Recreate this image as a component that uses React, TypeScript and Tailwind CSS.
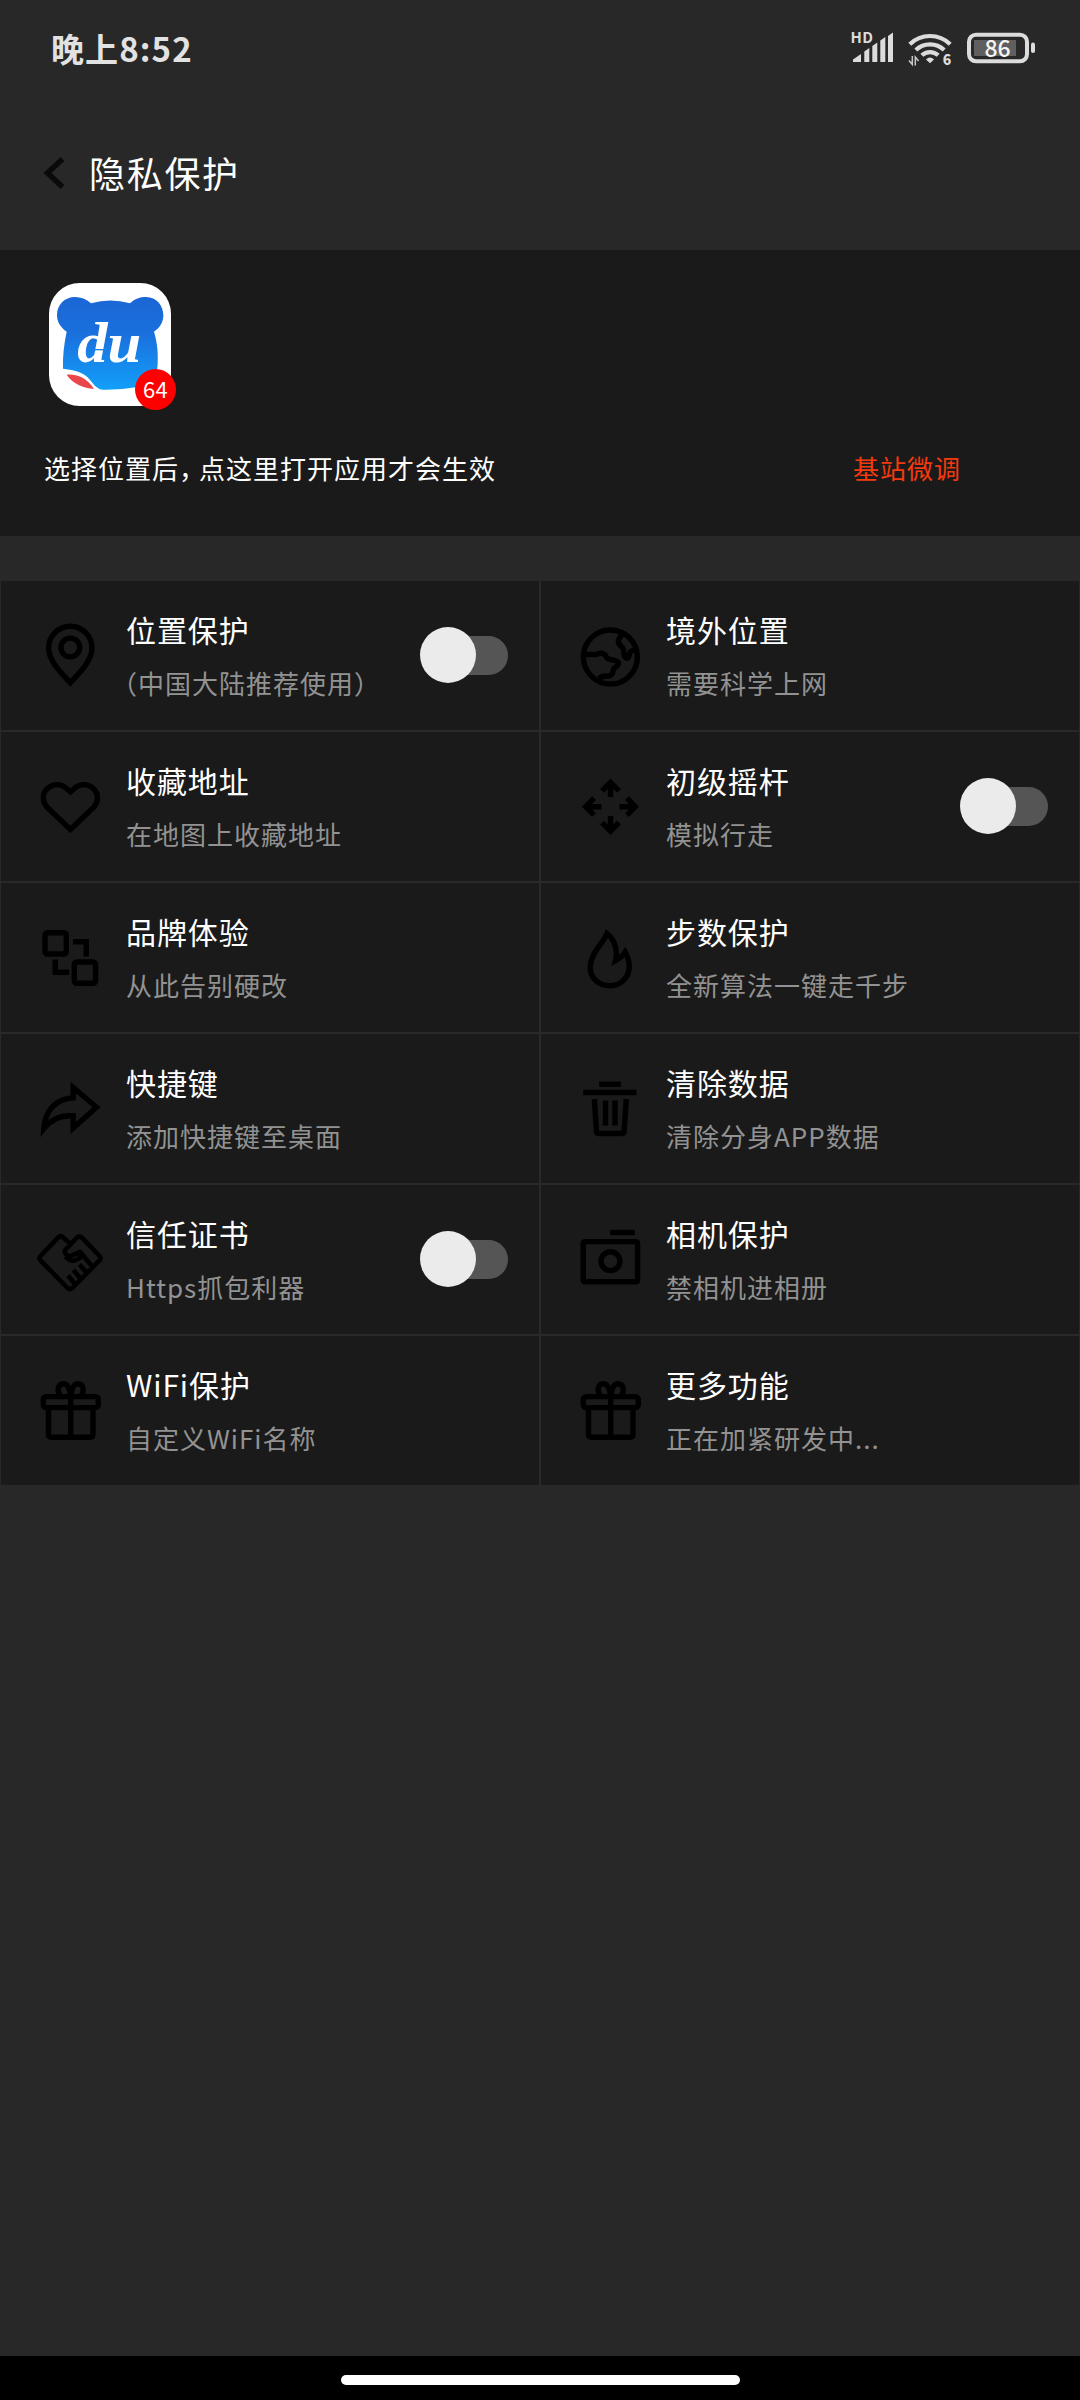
import { useState } from "react";
import type { ReactNode } from "react";

type Feature = {
	id: string;
	icon: ReactNode;
	title: string;
	desc: string;
	toggle?: boolean;
	narrow?: boolean;
};

function Glyph({ children }: { children: ReactNode }) {
	return (
		<svg
			viewBox="0 0 73 73"
			className="size-[73px] shrink-0"
			fill="none"
			stroke="#000"
			strokeWidth={5.4}
		>
			{children}
		</svg>
	);
}

const PinIcon = (
	<Glyph>
		<path d="M36.3 63.8C28 54.5 14.6 42 14.6 29a21.7 21.7 0 0 1 43.4 0C58 42 44.6 54.5 36.3 63.8Z" />
		<circle cx="36.3" cy="28.5" r="9.4" />
	</Glyph>
);

const GlobeIcon = (
	<Glyph>
		<circle cx="36.4" cy="38" r="27" />
		<path
			d="M11 35.5h12c3-2.500 7.500-1.500 9 2 1.500 3.500 4 2.500 7 3.500 3.500 1 6 1.500 5.500 4-.5 2.500-4.500 3-5 5.500-.5 4-1.500 6.500-5 6.500-4 0-6.500-.5-9.500 2.500"
			strokeLinejoin="round"
		/>
		<path
			d="M50.500 13.500c-4 3-6.500 6.500-6 10 .5 4 4.500 3.500 5 7 .3 3.500 0 7 2.500 8.500 2.500 1 3-2 3.500-4.500s3-3.500 6-3"
			strokeLinejoin="round"
		/>
	</Glyph>
);

const HeartIcon = (
	<Glyph>
		<path d="M36.4 59.500 13.300 37.500C8 31.500 8 23.500 13.500 18.500c5.500-5.200 13.500-5.200 19 0l3.900 3.300 3.900-3.300c5.500-5.200 13.500-5.200 19 0 5.500 5 5.500 13 .2 19Z" />
	</Glyph>
);

const MoveIcon = (
	<Glyph>
		<path d="M36.500 27V12M28 20.800l8.500-8.500 8.500 8.500M36.500 46v15.500M28 52.700l8.500 8.500 8.500-8.500M27.500 36.700H12M20 28.200l-8.300 8.500 8.300 8.500M45.500 36.700H61M53 28.200l8.300 8.500-8.300 8.500" />
	</Glyph>
);

const BrandIcon = (
	<Glyph>
		<rect x="11" y="11.700" width="21.300" height="21.300" rx="2.500" />
		<rect x="40.300" y="41" width="21.300" height="21.300" rx="2.500" />
		<path d="M39 20.700h13.200V35.500M21.200 38.500v12.800h14" />
	</Glyph>
);

const FlameIcon = (
	<Glyph>
		<path d="M33 12.500C29 23 16.200 32 16.200 46.500c0 10.500 8.500 18.300 19.300 18.300s19.700-8 19.700-18.800c0-5.800-1.700-11-4-15-2.500 4-5.200 6-9.700 8.500 2.500-9.500-.5-20.500-8.500-27Z" />
	</Glyph>
);

const ShareIcon = (
	<Glyph>
		<path d="M39.200 15.500 62.500 35.300 39.200 56V43.800C27.500 43 17.500 46.500 9.800 56.500 11 38.500 21.500 27 39.200 25.800Z" />
	</Glyph>
);

const TrashIcon = (
	<Glyph>
		<path d="M25.200 12.200h21.700M9.200 20.500h53.200M20.300 27l2.200 32.500q.2 2 2.200 2h23.200q2 0 2.200-2L52.300 27M31.500 28.500v25M41 28.500v25" />
	</Glyph>
);

const HandshakeIcon = (
	<Glyph>
		<path
			strokeLinejoin="round"
			strokeWidth={4.6}
			d="M35.900 20.300 28.500 14q-2-1.600-4 .2L6.500 33q-2 2.200 0 4.400L33.500 65q2.400 2.200 4.800 0L65.500 37.400q2-2.200 0-4.400L47.500 14.200q-2-1.800-4 0L32 26q-2.500 3 .5 5.800 2.800 2.500 5.500.5l8-3.500L58.500 44M46 29v6l-5.500 2.500c-4 .8-6-.5-9-4"
		/>
		<path strokeWidth={4.6} d="m45.500 41.500 7 8M39.500 47l6.500 8M34 52.500l6.500 8" />
	</Glyph>
);

const CameraIcon = (
	<Glyph>
		<path d="M36.300 9.500h24.400" />
		<rect x="9.200" y="18.600" width="54.400" height="40.200" rx="1.500" />
		<circle cx="36.500" cy="38.200" r="9.400" />
	</Glyph>
);

const GiftIcon = (
	<Glyph>
		<rect x="9.300" y="22.600" width="55" height="11" rx="3" />
		<path d="M14.500 34v26q0 3.200 3 3.200h38.500q3 0 3-3.200V34M36.700 22v41" />
		<path d="M36.700 22c-1-7-3.200-12.300-7-12.300-6 0-7 7-3.500 12.300M36.700 22c1-7 3.200-12.300 7-12.300 6 0 7 7 3.500 12.300" />
	</Glyph>
);

const features: Feature[] = [
	{ id: "location", icon: PinIcon, title: "位置保护", desc: "（中国大陆推荐使用）", toggle: true, narrow: true },
	{ id: "abroad", icon: GlobeIcon, title: "境外位置", desc: "需要科学上网" },
	{ id: "favorite", icon: HeartIcon, title: "收藏地址", desc: "在地图上收藏地址" },
	{ id: "joystick", icon: MoveIcon, title: "初级摇杆", desc: "模拟行走", toggle: true },
	{ id: "brand", icon: BrandIcon, title: "品牌体验", desc: "从此告别硬改" },
	{ id: "steps", icon: FlameIcon, title: "步数保护", desc: "全新算法一键走千步" },
	{ id: "shortcut", icon: ShareIcon, title: "快捷键", desc: "添加快捷键至桌面" },
	{ id: "clear", icon: TrashIcon, title: "清除数据", desc: "清除分身APP数据" },
	{ id: "cert", icon: HandshakeIcon, title: "信任证书", desc: "Https抓包利器", toggle: true },
	{ id: "camera", icon: CameraIcon, title: "相机保护", desc: "禁相机进相册" },
	{ id: "wifi", icon: GiftIcon, title: "WiFi保护", desc: "自定义WiFi名称" },
	{ id: "more", icon: GiftIcon, title: "更多功能", desc: "正在加紧研发中..." },
];

function Toggle({ label }: { label: string }) {
	const [on, setOn] = useState(false);

	return (
		<button
			type="button"
			role="switch"
			aria-checked={on}
			aria-label={label}
			onClick={() => setOn(!on)}
			className={`mb-px flex h-[39px] w-20 shrink-0 items-center rounded-full bg-[#555555] ${on ? "justify-end" : "justify-start"}`}
		>
			<span className="-mx-2 size-14 shrink-0 rounded-full bg-[#ebebeb]" />
		</button>
	);
}

function StatusBar() {
	return (
		<div className="flex h-24 items-center justify-between pr-[41px] pl-[51px] text-[#e2e2e2]">
			<span className="text-[33px] leading-none font-bold tracking-[1.1px]">晚上8:52</span>
			<svg
				width="192"
				height="56"
				viewBox="847 20 192 56"
				fill="#dcdcdc"
				className="font-['Noto_Sans_CJK_SC',sans-serif]"
			>
				<text x="850.500" y="43.300" fontSize="15" fontWeight="700" letterSpacing="0.3">
					HD
				</text>
				<path d="M853 62v-2.500l8-5.500v8ZM864.300 62V51.500l5-3.500V62ZM872.300 62V46l5-3.500V62ZM880.300 62V40.500l5-3.500V62ZM888 62V36l5-3.500V62Z" />
				<g fill="none" stroke="#dcdcdc" strokeWidth="4.200">
					<path d="M909.800 44.200a29 29 0 0 1 40.400 0" />
					<path d="M915.800 50a20.500 20.500 0 0 1 28.400 0" />
					<path d="M921.800 55.300a12 12 0 0 1 16.400 0" />
				</g>
				<path d="M930 63.300 926 59.500q4-4.200 8 0Z" />
				<path
					fill="none"
					stroke="#c8c8c8"
					strokeWidth="1.500"
					d="M912.300 56v8.500l-3.300-4M915.300 65.500V57l3.300 4"
				/>
				<text x="942.800" y="65.300" fontSize="14" fontWeight="900">
					6
				</text>
				<rect
					x="969"
					y="34.700"
					width="58"
					height="26.600"
					rx="7"
					fill="none"
					stroke="#dcdcdc"
					strokeWidth="4"
				/>
				<rect x="974" y="40" width="42" height="16" fill="#5f5f5f" />
				<rect x="1031" y="42.500" width="4" height="10.500" rx="2" />
				<text x="984.500" y="56.600" fontSize="23" fontWeight="500" fill="#f5f5f5">
					86
				</text>
			</svg>
		</div>
	);
}

function AppIcon() {
	return (
		<div className="relative h-[123px] w-[122px]">
			<svg viewBox="87 68 366 369" className="size-full">
				<defs>
					<linearGradient id="bear" x1="0" y1="110" x2="0" y2="390" gradientUnits="userSpaceOnUse">
						<stop offset="0" stopColor="#1b66d4" />
						<stop offset="0.4" stopColor="#1a70dd" />
						<stop offset="1" stopColor="#12a0fa" />
					</linearGradient>
				</defs>
				<rect x="87" y="68" width="366" height="369" rx="92" fill="#fff" />
				<path
					fill="url(#bear)"
					d="M213 129Q271 112 330 129C345 115 360 110 378 110c32 0 52 26 52 55 0 20-10 38-28 49 12 40 12 70 11 96q-1 60-60 70-50 9-104 8c-15-1-25-12-37-27-18-24-40-31-83-36q-2-50 11-111c-20-14-29-30-29-50 0-30 22-54 54-54 18 0 34 6 48 19Z"
				/>
				<path fill="#e8474c" d="M140 343c30-2 60 8 82 43-32-3-64-16-82-43Z" />
				<text
					x="172"
					y="305"
					fill="#fff"
					fontSize="174"
					fontWeight="700"
					fontStyle="italic"
					textLength="192"
					lengthAdjust="spacingAndGlyphs"
					className="font-['Liberation_Serif',serif]"
				>
					du
				</text>
				<path stroke="#1a7fe4" strokeWidth="4" d="M222 268h34" />
			</svg>
			<span className="absolute top-[86px] left-[86px] flex size-[41px] items-center justify-center rounded-full bg-[#fe0000] pb-1 text-[22px] leading-none tracking-[0.3px] text-white">
				64
			</span>
		</div>
	);
}

export default function App() {
	return (
		<div className="flex h-[2400px] w-[1080px] flex-col bg-[#282828] font-['Noto_Sans_CJK_SC',sans-serif] text-white">
			<StatusBar />

			<header className="flex h-[154px] items-center pl-[43px]">
				<svg width="22" height="32" viewBox="0 0 22 32" fill="none" stroke="#0a0a0a" strokeWidth="5.500">
					<path d="M19.500 2 4.500 16l15 14" />
				</svg>
				<h1 className="mb-[3px] ml-6 text-[36px] leading-none tracking-[1.7px]">隐私保护</h1>
			</header>

			<section className="h-[286px] bg-[#1a1a1a] pt-[33px] pl-[49px]">
				<AppIcon />
				<div className="mt-[42px] -ml-[5px] flex text-[26px] leading-[40px] tracking-[1px]">
					<p className="w-[809px]">
						选择位置后<span className="mr-[-7px]">，</span>点这里打开应用才会生效
					</p>
					<button type="button" className="text-[#f23a0e]">
						基站微调
					</button>
				</div>
			</section>

			<main className="mt-11 grid grid-cols-2">
				{features.map(({ id, icon, title, desc, toggle, narrow }) => (
					<div
						key={id}
						className="flex h-[151px] items-center border border-[#292929] bg-[#1a1a1a] pr-[31px] pl-[33px]"
					>
						{icon}
						<div className="ml-[19px] flex-1 pt-px whitespace-nowrap">
							<h2 className="text-[30px] leading-[54px] tracking-[0.9px]">{title}</h2>
							<p
								className={`text-[26px] leading-[54px] tracking-[1px] text-[#929292] ${narrow ? "-ml-0.5 [font-feature-settings:'halt']" : ""}`}
							>
								{desc}
							</p>
						</div>
						{toggle && <Toggle label={title} />}
					</div>
				))}
			</main>

			<footer className="mt-auto flex h-11 justify-center bg-black pt-[19px]">
				<div className="h-2.5 w-[399px] rounded-full bg-white" />
			</footer>
		</div>
	);
}
